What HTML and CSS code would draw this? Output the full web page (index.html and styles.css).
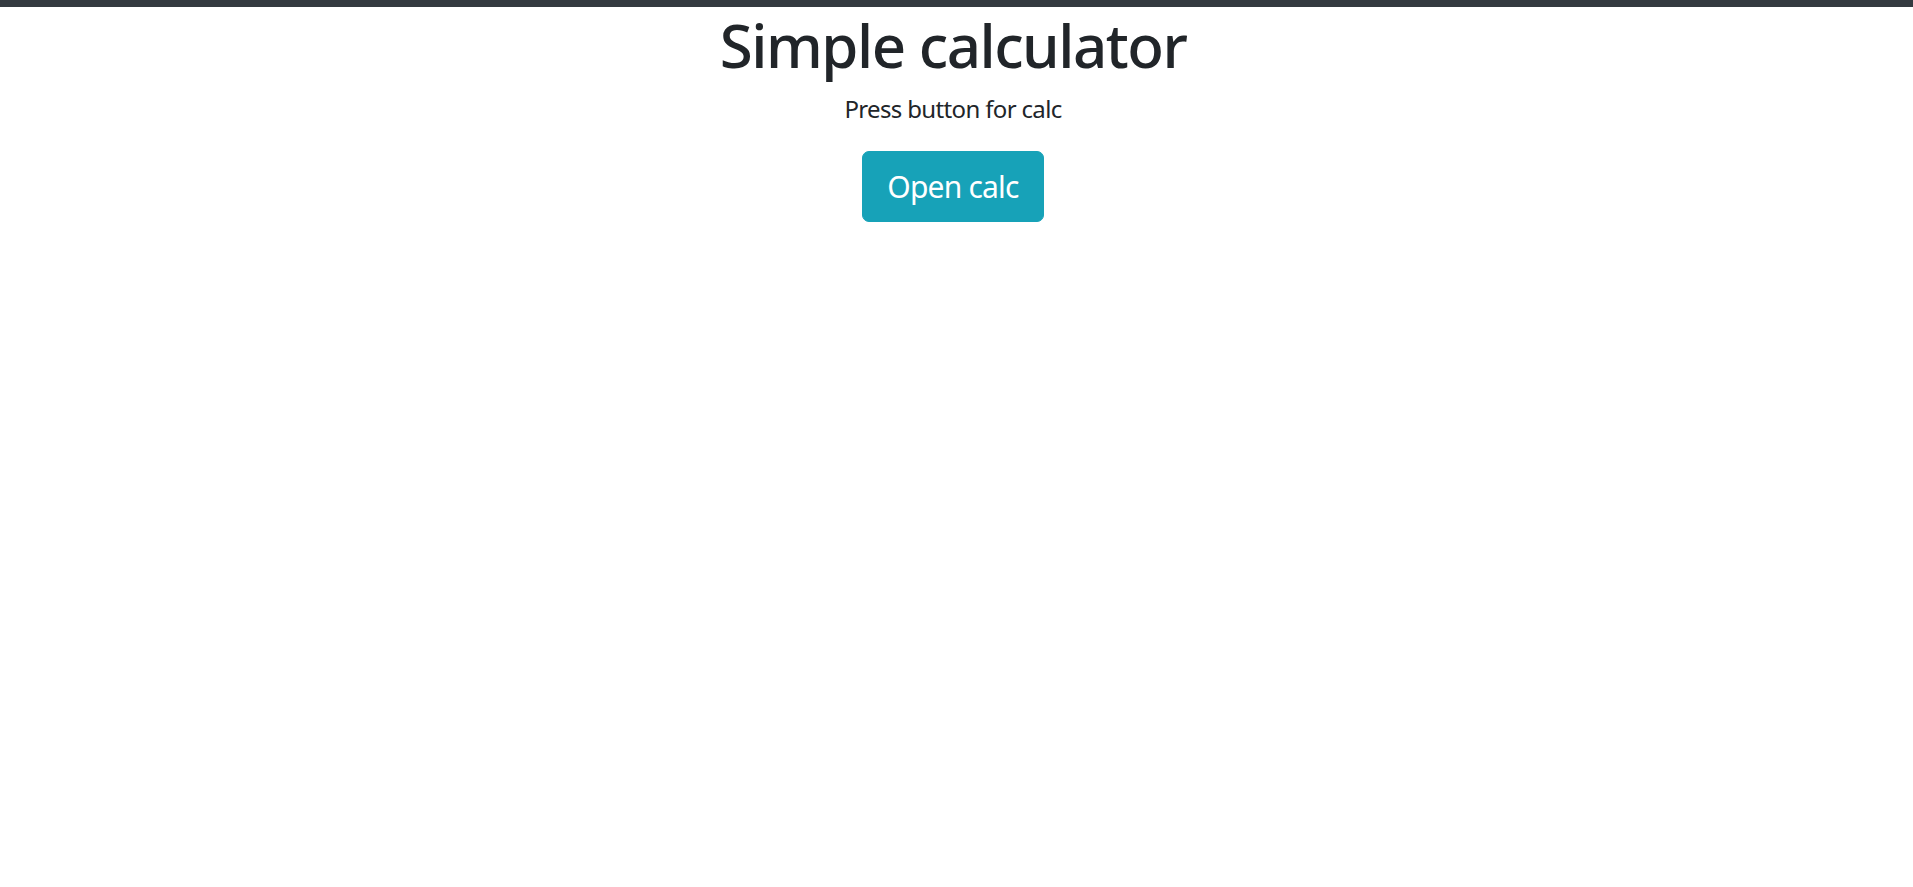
FILE: index.html
```html
<!DOCTYPE html>
<html lang="en">
<head>
<meta charset="utf-8">
<title>Simple calculator</title>
<link rel="stylesheet" href="styles.css">
</head>
<body>
<div class="topbar"></div>
<main class="page">
  <h1 class="title">Simple calculator</h1>
  <p class="lead">Press button for calc</p>
  <button class="btn-open" type="button">Open calc</button>
</main>
</body>
</html>
```
FILE: styles.css
```css
html, body {
  margin: 0;
  padding: 0;
  background: #fff;
}
body {
  font-family: "Noto Sans", "Open Sans", "Liberation Sans", sans-serif;
  color: #212529;
}
.topbar {
  height: 7px;
  background: #343a40;
}
.page {
  display: flex;
  flex-direction: column;
  align-items: center;
  text-align: center;
  padding-right: 7px;
}
.title {
  margin: 2px 0 10px;
  font-size: 60px;
  font-weight: 500;
  letter-spacing: -1.5px;
  line-height: 72px;
  color: #212529;
}
.lead {
  margin: 0 0 24px;
  font-size: 24px;
  letter-spacing: -0.65px;
  line-height: 36px;
}
.btn-open {
  font-family: inherit;
  font-size: 30px;
  letter-spacing: -0.8px;
  line-height: 45px;
  padding: 12px 24px;
  border: 1.5px solid #17a2b8;
  border-radius: 7px;
  background: #17a2b8;
  color: #fff;
  cursor: pointer;
}
```
